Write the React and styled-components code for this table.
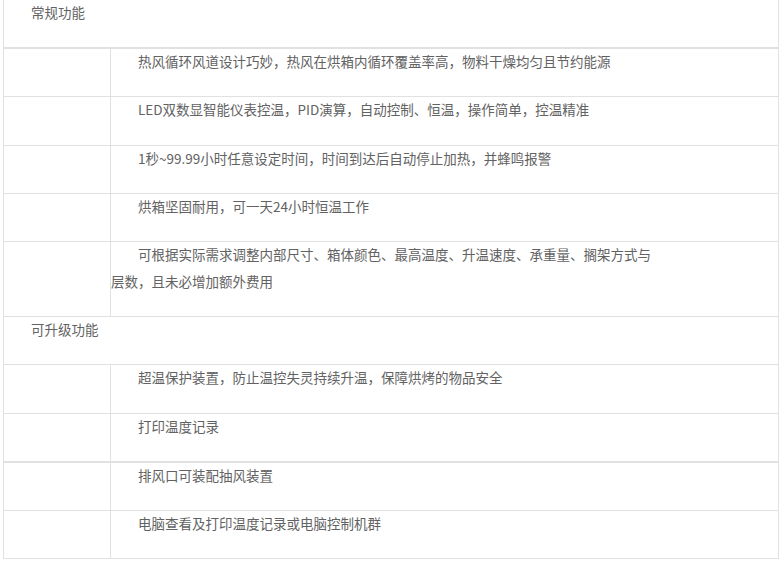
import styled, { createGlobalStyle } from "styled-components";

const GlobalStyle = createGlobalStyle`
	body {
		margin: 0;
		background: #ffffff;
	}
`;

const Table = styled.table`
	border-collapse: collapse;
	width: 776px;
	margin: -1px 0 0 3px;
	font-family: "Noto Sans CJK SC", "Noto Sans", sans-serif;
	font-size: 13.5px;
	color: #626262;
`;

const Row = styled.tr`
	& > td {
		border-top: ${(p) => (p.$thick ? "2px" : "1px")} solid #e1e1e1;
	}
`;

const Cell = styled.td`
	border: 1px solid #e1e1e1;
	padding: 0 0 21.2px 0;
	vertical-align: top;
	line-height: 27px;
	width: ${(p) => p.$w || "auto"};
`;

const Text = styled.p`
	margin: -1px 0 0 0;
	text-indent: 2em;
	max-width: ${(p) => p.$max || "none"};
`;

const groups = [
	{
		title: "常规功能",
		items: [
			{ text: "热风循环风道设计巧妙，热风在烘箱内循环覆盖率高，物料干燥均匀且节约能源", thick: true },
			{ text: "LED双数显智能仪表控温，PID演算，自动控制、恒温，操作简单，控温精准" },
			{ text: "1秒~99.99小时任意设定时间，时间到达后自动停止加热，并蜂鸣报警" },
			{ text: "烘箱坚固耐用，可一天24小时恒温工作" },
			{
				text: "可根据实际需求调整内部尺寸、箱体颜色、最高温度、升温速度、承重量、搁架方式与层数，且未必增加额外费用",
				max: "545px",
			},
		],
	},
	{
		title: "可升级功能",
		items: [
			{ text: "超温保护装置，防止温控失灵持续升温，保障烘烤的物品安全" },
			{ text: "打印温度记录" },
			{ text: "排风口可装配抽风装置", thick: true },
			{ text: "电脑查看及打印温度记录或电脑控制机群" },
		],
	},
];

const App = () => {
	return (
		<>
			<GlobalStyle />
			<Table>
				<tbody>
					{groups.map((g) => [
						<Row key={g.title}>
							<Cell colSpan={2}>
								<Text>{g.title}</Text>
							</Cell>
						</Row>,
						...g.items.map((item) => (
							<Row key={item.text} $thick={item.thick}>
								<Cell $w="106px" />
								<Cell>
									<Text $max={item.max}>{item.text}</Text>
								</Cell>
							</Row>
						)),
					])}
				</tbody>
			</Table>
		</>
	);
};

export default App;
